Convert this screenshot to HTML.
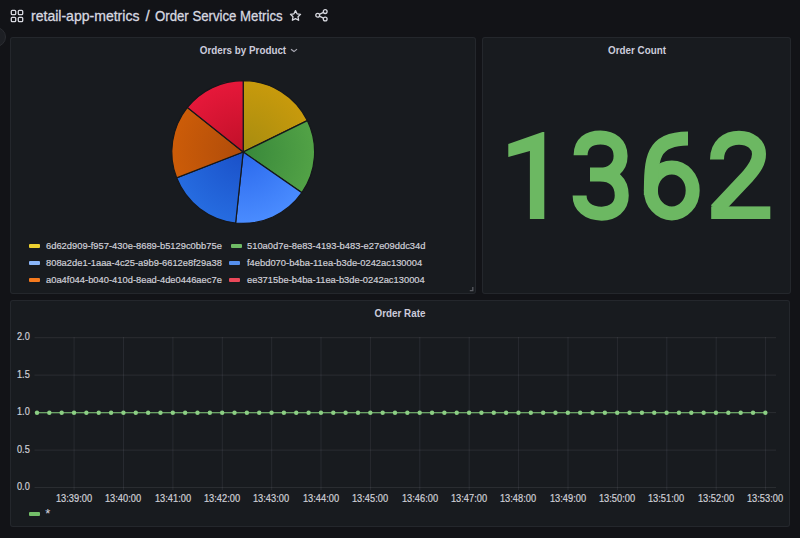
<!DOCTYPE html>
<html><head><meta charset="utf-8"><style>
*{box-sizing:border-box;margin:0;padding:0}
html,body{width:800px;height:538px;overflow:hidden;background:#121317;font-family:"Liberation Sans",sans-serif;color:#ccccdc}
.abs{position:absolute}
.panel{position:absolute;background:#181b1f;border:1px solid rgba(204,204,220,0.07);border-radius:3px}
.title{position:absolute;font-size:10px;font-weight:700;color:#ccccdc;white-space:nowrap;line-height:12px}
.yl{position:absolute;left:0;width:29.5px;text-align:right;font-size:9.1px;line-height:12px;color:#ccccdc}
.xl{position:absolute;top:492px;width:60px;text-align:center;font-size:9.1px;line-height:12px;color:#ccccdc}
.lm{position:absolute;width:11px;height:3.6px;border-radius:1px}
.lt{position:absolute;font-size:9.3px;line-height:12px;white-space:nowrap;color:#ccccdc}
</style></head><body>
<div class="abs" style="left:-14px;top:27px;width:20px;height:20px;border-radius:50%;background:#1d1f24;border:1px solid #2a2c31"></div>
<svg class="abs" style="left:10px;top:9px" width="14" height="14" viewBox="0 0 14 14" fill="none" stroke="#d8d9e0" stroke-width="1.3"><rect x="1.3" y="1.3" width="4.4" height="4.4" rx="1"/><rect x="8.3" y="1.3" width="4.4" height="4.4" rx="1"/><rect x="1.3" y="8.3" width="4.4" height="4.4" rx="1"/><rect x="8.3" y="8.3" width="4.4" height="4.4" rx="1"/></svg>
<div class="abs" style="left:30.50px;top:7.75px;font-size:15px;line-height:15px;font-weight:400;color:#d8d9e0;white-space:nowrap;transform:scaleX(0.936);transform-origin:0 0;-webkit-text-stroke:0.3px #d8d9e0">retail-app-metrics</div>
<div class="abs" style="left:145.50px;top:7.85px;font-size:15px;line-height:15px;font-weight:400;color:#d8d9e0;white-space:nowrap;transform:scaleX(1);transform-origin:0 0;-webkit-text-stroke:0.3px #d8d9e0">/</div><div class="abs" style="left:154.50px;top:7.85px;font-size:15px;line-height:15px;font-weight:400;color:#d8d9e0;white-space:nowrap;transform:scaleX(0.88);transform-origin:0 0;-webkit-text-stroke:0.3px #d8d9e0">Order Service Metrics</div>
<svg class="abs" style="left:288px;top:8px" width="15" height="15" viewBox="0 0 15 15" fill="none" stroke="#d8d9e0" stroke-width="1.3" stroke-linejoin="round"><path d="M7.50 2.65 L9.06 5.81 L12.54 6.31 L10.02 8.77 L10.62 12.24 L7.50 10.60 L4.38 12.24 L4.98 8.77 L2.46 6.31 L5.94 5.81 Z"/></svg>
<svg class="abs" style="left:314px;top:8px" width="16" height="16" viewBox="0 0 16 16" fill="none" stroke="#d8d9e0" stroke-width="1.3"><circle cx="3.7" cy="7.3" r="1.9"/><circle cx="11.2" cy="3.6" r="1.9"/><circle cx="11.2" cy="11.0" r="1.9"/><line x1="5.4" y1="6.45" x2="9.5" y2="4.45"/><line x1="5.4" y1="8.15" x2="9.5" y2="10.15"/></svg>

<div class="panel" style="left:10px;top:37px;width:465.5px;height:257px"></div>
<div class="panel" style="left:482px;top:37px;width:308.5px;height:257px"></div>
<div class="panel" style="left:10px;top:300px;width:780px;height:227px"></div>

<div class="abs" style="left:42.90px;width:400px;text-align:center;top:45.27px;font-size:11.8px;line-height:11.8px;font-weight:700;color:#ccccdc;white-space:nowrap;transform:scaleX(0.833);transform-origin:50% 0;">Orders by Product</div>
<svg class="abs" style="left:290px;top:46px" width="8" height="8" viewBox="0 0 8 8" fill="none" stroke="#a8a8b2" stroke-width="1.2" stroke-linejoin="round"><path d="M1 3.3 L4 5.6 L7 3.1"/></svg>
<div class="abs" style="left:436.60px;width:400px;text-align:center;top:44.67px;font-size:11.8px;line-height:11.8px;font-weight:700;color:#ccccdc;white-space:nowrap;transform:scaleX(0.833);transform-origin:50% 0;">Order Count</div>
<div class="abs" style="left:200.00px;width:400px;text-align:center;top:307.97px;font-size:11.8px;line-height:11.8px;font-weight:700;color:#ccccdc;white-space:nowrap;transform:scaleX(0.833);transform-origin:50% 0;">Order Rate</div>
<svg class="abs" width="800" height="300" style="left:0;top:0"><defs><radialGradient id="g0" gradientUnits="userSpaceOnUse" cx="243.2" cy="152" r="71.4"><stop offset="0" stop-color="#a68c10"/><stop offset="1" stop-color="#c89a0c"/></radialGradient><radialGradient id="g1" gradientUnits="userSpaceOnUse" cx="243.2" cy="152" r="71.4"><stop offset="0" stop-color="#38883a"/><stop offset="1" stop-color="#52a246"/></radialGradient><radialGradient id="g2" gradientUnits="userSpaceOnUse" cx="243.2" cy="152" r="71.4"><stop offset="0" stop-color="#2a68ec"/><stop offset="1" stop-color="#4a8cff"/></radialGradient><radialGradient id="g3" gradientUnits="userSpaceOnUse" cx="243.2" cy="152" r="71.4"><stop offset="0" stop-color="#1a50c8"/><stop offset="1" stop-color="#266ce0"/></radialGradient><radialGradient id="g4" gradientUnits="userSpaceOnUse" cx="243.2" cy="152" r="71.4"><stop offset="0" stop-color="#b04c0a"/><stop offset="1" stop-color="#cc5c08"/></radialGradient><radialGradient id="g5" gradientUnits="userSpaceOnUse" cx="243.2" cy="152" r="71.4"><stop offset="0" stop-color="#c01028"/><stop offset="1" stop-color="#e6183a"/></radialGradient></defs><path d="M243.2,152 L243.20,80.60 A71.4,71.4 0 0 1 307.32,120.59 Z" fill="url(#g0)" stroke="#15171b" stroke-width="1.2"/><path d="M243.2,152 L307.32,120.59 A71.4,71.4 0 0 1 301.90,192.65 Z" fill="url(#g1)" stroke="#15171b" stroke-width="1.2"/><path d="M243.2,152 L301.90,192.65 A71.4,71.4 0 0 1 235.61,223.00 Z" fill="url(#g2)" stroke="#15171b" stroke-width="1.2"/><path d="M243.2,152 L235.61,223.00 A71.4,71.4 0 0 1 176.63,177.82 Z" fill="url(#g3)" stroke="#15171b" stroke-width="1.2"/><path d="M243.2,152 L176.63,177.82 A71.4,71.4 0 0 1 187.40,107.45 Z" fill="url(#g4)" stroke="#15171b" stroke-width="1.2"/><path d="M243.2,152 L187.40,107.45 A71.4,71.4 0 0 1 243.20,80.60 Z" fill="url(#g5)" stroke="#15171b" stroke-width="1.2"/></svg>
<div class="lm" style="left:28.7px;top:244.2px;background:#ecd030"></div><div class="abs" style="left:46.20px;top:240.67px;font-size:9.8px;line-height:9.8px;font-weight:400;color:#d0d0d8;white-space:nowrap;transform:scaleX(0.955);transform-origin:0 0;-webkit-text-stroke:0.2px #d0d0d8">6d62d909-f957-430e-8689-b5129c0bb75e</div><div class="lm" style="left:231px;top:244.2px;background:#6fbb65"></div><div class="abs" style="left:247.30px;top:240.67px;font-size:9.8px;line-height:9.8px;font-weight:400;color:#d0d0d8;white-space:nowrap;transform:scaleX(0.955);transform-origin:0 0;-webkit-text-stroke:0.2px #d0d0d8">510a0d7e-8e83-4193-b483-e27e09ddc34d</div><div class="lm" style="left:28.7px;top:261.2px;background:#8ab6fa"></div><div class="abs" style="left:46.20px;top:257.67px;font-size:9.8px;line-height:9.8px;font-weight:400;color:#d0d0d8;white-space:nowrap;transform:scaleX(0.955);transform-origin:0 0;-webkit-text-stroke:0.2px #d0d0d8">808a2de1-1aaa-4c25-a9b9-6612e8f29a38</div><div class="lm" style="left:229.3px;top:261.2px;background:#5590ee"></div><div class="abs" style="left:246.80px;top:257.67px;font-size:9.8px;line-height:9.8px;font-weight:400;color:#d0d0d8;white-space:nowrap;transform:scaleX(0.955);transform-origin:0 0;-webkit-text-stroke:0.2px #d0d0d8">f4ebd070-b4ba-11ea-b3de-0242ac130004</div><div class="lm" style="left:28.7px;top:278.2px;background:#f57a1e"></div><div class="abs" style="left:46.20px;top:274.67px;font-size:9.8px;line-height:9.8px;font-weight:400;color:#d0d0d8;white-space:nowrap;transform:scaleX(0.955);transform-origin:0 0;-webkit-text-stroke:0.2px #d0d0d8">a0a4f044-b040-410d-8ead-4de0446aec7e</div><div class="lm" style="left:229.3px;top:278.2px;background:#ea4859"></div><div class="abs" style="left:246.80px;top:274.67px;font-size:9.8px;line-height:9.8px;font-weight:400;color:#d0d0d8;white-space:nowrap;transform:scaleX(0.955);transform-origin:0 0;-webkit-text-stroke:0.2px #d0d0d8">ee3715be-b4ba-11ea-b3de-0242ac130004</div>
<svg class="abs" style="left:469px;top:286px" width="6" height="6" viewBox="0 0 6 6" fill="none" stroke="#585a60" stroke-width="1.3"><path d="M3.8 1 L3.8 4.6 L0.8 4.6"/></svg>
<svg class="abs" style="left:0;top:0" width="800" height="300"><g fill="#6cb862"><path d="M544.3,132 L544.3,218.9 L529.9,218.9 L529.9,150.9 L508.3,156.9 L508.3,143.9 L542.5,132 Z"/><rect x="711.2" y="206.4" width="59.1" height="12.6"/></g><g fill="none" stroke="#6cb862" stroke-width="14"><path d="M580.6,155.3 C580.6,143 589,137.4 600.4,137.4 C612,137.4 620.6,144 620.6,156 C620.6,168 611,174.6 600,174.6 L590,174.6 M600,174.6 C613,174.6 621.75,182 621.75,195.5 C621.75,207 613,213.65 601.7,213.65 C588,213.65 579.6,206 579.6,195.5"/><ellipse cx="671.8" cy="190.4" rx="20.9" ry="23"/><path d="M650.85,195 C650.85,158 652,138.5 688,138.5"/><path d="M717,159.5 C717,145 727,137.65 739,137.65 C751,137.65 759,145 759,154 C759,162 755,168 748,176 L716,210"/></g></svg>
<svg class="abs" width="800" height="538" style="left:0;top:0"><line x1="34.5" y1="337.7" x2="776" y2="337.7" stroke="rgba(204,204,220,0.1)" stroke-width="1"/><line x1="34.5" y1="375.1" x2="776" y2="375.1" stroke="rgba(204,204,220,0.1)" stroke-width="1"/><line x1="34.5" y1="412.6" x2="776" y2="412.6" stroke="rgba(204,204,220,0.1)" stroke-width="1"/><line x1="34.5" y1="450.1" x2="776" y2="450.1" stroke="rgba(204,204,220,0.1)" stroke-width="1"/><line x1="34.5" y1="487.5" x2="776" y2="487.5" stroke="rgba(204,204,220,0.1)" stroke-width="1"/><line x1="74.1" y1="337" x2="74.1" y2="490" stroke="rgba(204,204,220,0.09)" stroke-width="1"/><line x1="123.5" y1="337" x2="123.5" y2="490" stroke="rgba(204,204,220,0.09)" stroke-width="1"/><line x1="172.9" y1="337" x2="172.9" y2="490" stroke="rgba(204,204,220,0.09)" stroke-width="1"/><line x1="222.3" y1="337" x2="222.3" y2="490" stroke="rgba(204,204,220,0.09)" stroke-width="1"/><line x1="271.7" y1="337" x2="271.7" y2="490" stroke="rgba(204,204,220,0.09)" stroke-width="1"/><line x1="321.0" y1="337" x2="321.0" y2="490" stroke="rgba(204,204,220,0.09)" stroke-width="1"/><line x1="370.4" y1="337" x2="370.4" y2="490" stroke="rgba(204,204,220,0.09)" stroke-width="1"/><line x1="419.8" y1="337" x2="419.8" y2="490" stroke="rgba(204,204,220,0.09)" stroke-width="1"/><line x1="469.2" y1="337" x2="469.2" y2="490" stroke="rgba(204,204,220,0.09)" stroke-width="1"/><line x1="518.6" y1="337" x2="518.6" y2="490" stroke="rgba(204,204,220,0.09)" stroke-width="1"/><line x1="568.0" y1="337" x2="568.0" y2="490" stroke="rgba(204,204,220,0.09)" stroke-width="1"/><line x1="617.4" y1="337" x2="617.4" y2="490" stroke="rgba(204,204,220,0.09)" stroke-width="1"/><line x1="666.8" y1="337" x2="666.8" y2="490" stroke="rgba(204,204,220,0.09)" stroke-width="1"/><line x1="716.2" y1="337" x2="716.2" y2="490" stroke="rgba(204,204,220,0.09)" stroke-width="1"/><line x1="765.6" y1="337" x2="765.6" y2="490" stroke="rgba(204,204,220,0.09)" stroke-width="1"/><line x1="37.0" y1="412.8" x2="765.36" y2="412.8" stroke="#80c878" stroke-width="1.1"/><circle cx="37.00" cy="412.8" r="2.2" fill="#8ccf84"/><circle cx="49.34" cy="412.8" r="2.2" fill="#8ccf84"/><circle cx="61.69" cy="412.8" r="2.2" fill="#8ccf84"/><circle cx="74.03" cy="412.8" r="2.2" fill="#8ccf84"/><circle cx="86.38" cy="412.8" r="2.2" fill="#8ccf84"/><circle cx="98.72" cy="412.8" r="2.2" fill="#8ccf84"/><circle cx="111.07" cy="412.8" r="2.2" fill="#8ccf84"/><circle cx="123.42" cy="412.8" r="2.2" fill="#8ccf84"/><circle cx="135.76" cy="412.8" r="2.2" fill="#8ccf84"/><circle cx="148.11" cy="412.8" r="2.2" fill="#8ccf84"/><circle cx="160.45" cy="412.8" r="2.2" fill="#8ccf84"/><circle cx="172.80" cy="412.8" r="2.2" fill="#8ccf84"/><circle cx="185.14" cy="412.8" r="2.2" fill="#8ccf84"/><circle cx="197.49" cy="412.8" r="2.2" fill="#8ccf84"/><circle cx="209.83" cy="412.8" r="2.2" fill="#8ccf84"/><circle cx="222.18" cy="412.8" r="2.2" fill="#8ccf84"/><circle cx="234.52" cy="412.8" r="2.2" fill="#8ccf84"/><circle cx="246.87" cy="412.8" r="2.2" fill="#8ccf84"/><circle cx="259.21" cy="412.8" r="2.2" fill="#8ccf84"/><circle cx="271.56" cy="412.8" r="2.2" fill="#8ccf84"/><circle cx="283.90" cy="412.8" r="2.2" fill="#8ccf84"/><circle cx="296.25" cy="412.8" r="2.2" fill="#8ccf84"/><circle cx="308.59" cy="412.8" r="2.2" fill="#8ccf84"/><circle cx="320.94" cy="412.8" r="2.2" fill="#8ccf84"/><circle cx="333.28" cy="412.8" r="2.2" fill="#8ccf84"/><circle cx="345.62" cy="412.8" r="2.2" fill="#8ccf84"/><circle cx="357.97" cy="412.8" r="2.2" fill="#8ccf84"/><circle cx="370.31" cy="412.8" r="2.2" fill="#8ccf84"/><circle cx="382.66" cy="412.8" r="2.2" fill="#8ccf84"/><circle cx="395.00" cy="412.8" r="2.2" fill="#8ccf84"/><circle cx="407.35" cy="412.8" r="2.2" fill="#8ccf84"/><circle cx="419.69" cy="412.8" r="2.2" fill="#8ccf84"/><circle cx="432.04" cy="412.8" r="2.2" fill="#8ccf84"/><circle cx="444.39" cy="412.8" r="2.2" fill="#8ccf84"/><circle cx="456.73" cy="412.8" r="2.2" fill="#8ccf84"/><circle cx="469.08" cy="412.8" r="2.2" fill="#8ccf84"/><circle cx="481.42" cy="412.8" r="2.2" fill="#8ccf84"/><circle cx="493.77" cy="412.8" r="2.2" fill="#8ccf84"/><circle cx="506.11" cy="412.8" r="2.2" fill="#8ccf84"/><circle cx="518.46" cy="412.8" r="2.2" fill="#8ccf84"/><circle cx="530.80" cy="412.8" r="2.2" fill="#8ccf84"/><circle cx="543.14" cy="412.8" r="2.2" fill="#8ccf84"/><circle cx="555.49" cy="412.8" r="2.2" fill="#8ccf84"/><circle cx="567.84" cy="412.8" r="2.2" fill="#8ccf84"/><circle cx="580.18" cy="412.8" r="2.2" fill="#8ccf84"/><circle cx="592.52" cy="412.8" r="2.2" fill="#8ccf84"/><circle cx="604.87" cy="412.8" r="2.2" fill="#8ccf84"/><circle cx="617.22" cy="412.8" r="2.2" fill="#8ccf84"/><circle cx="629.56" cy="412.8" r="2.2" fill="#8ccf84"/><circle cx="641.91" cy="412.8" r="2.2" fill="#8ccf84"/><circle cx="654.25" cy="412.8" r="2.2" fill="#8ccf84"/><circle cx="666.60" cy="412.8" r="2.2" fill="#8ccf84"/><circle cx="678.94" cy="412.8" r="2.2" fill="#8ccf84"/><circle cx="691.29" cy="412.8" r="2.2" fill="#8ccf84"/><circle cx="703.63" cy="412.8" r="2.2" fill="#8ccf84"/><circle cx="715.98" cy="412.8" r="2.2" fill="#8ccf84"/><circle cx="728.32" cy="412.8" r="2.2" fill="#8ccf84"/><circle cx="740.67" cy="412.8" r="2.2" fill="#8ccf84"/><circle cx="753.01" cy="412.8" r="2.2" fill="#8ccf84"/><circle cx="765.36" cy="412.8" r="2.2" fill="#8ccf84"/></svg>
<div class="abs" style="left:16.50px;top:332.14px;font-size:10.3px;line-height:10.3px;font-weight:400;color:#d0d0d8;white-space:nowrap;transform:scaleX(0.89);transform-origin:0 0;-webkit-text-stroke:0.2px #d0d0d8">2.0</div><div class="abs" style="left:16.50px;top:369.59px;font-size:10.3px;line-height:10.3px;font-weight:400;color:#d0d0d8;white-space:nowrap;transform:scaleX(0.89);transform-origin:0 0;-webkit-text-stroke:0.2px #d0d0d8">1.5</div><div class="abs" style="left:16.50px;top:407.05px;font-size:10.3px;line-height:10.3px;font-weight:400;color:#d0d0d8;white-space:nowrap;transform:scaleX(0.89);transform-origin:0 0;-webkit-text-stroke:0.2px #d0d0d8">1.0</div><div class="abs" style="left:16.50px;top:444.50px;font-size:10.3px;line-height:10.3px;font-weight:400;color:#d0d0d8;white-space:nowrap;transform:scaleX(0.89);transform-origin:0 0;-webkit-text-stroke:0.2px #d0d0d8">0.5</div><div class="abs" style="left:16.50px;top:481.94px;font-size:10.3px;line-height:10.3px;font-weight:400;color:#d0d0d8;white-space:nowrap;transform:scaleX(0.89);transform-origin:0 0;-webkit-text-stroke:0.2px #d0d0d8">0.0</div>
<div class="abs" style="left:-126.20px;width:400px;text-align:center;top:494.25px;font-size:10.3px;line-height:10.3px;font-weight:400;color:#d0d0d8;white-space:nowrap;transform:scaleX(0.9);transform-origin:50% 0;-webkit-text-stroke:0.2px #d0d0d8">13:39:00</div><div class="abs" style="left:-76.81px;width:400px;text-align:center;top:494.25px;font-size:10.3px;line-height:10.3px;font-weight:400;color:#d0d0d8;white-space:nowrap;transform:scaleX(0.9);transform-origin:50% 0;-webkit-text-stroke:0.2px #d0d0d8">13:40:00</div><div class="abs" style="left:-27.42px;width:400px;text-align:center;top:494.25px;font-size:10.3px;line-height:10.3px;font-weight:400;color:#d0d0d8;white-space:nowrap;transform:scaleX(0.9);transform-origin:50% 0;-webkit-text-stroke:0.2px #d0d0d8">13:41:00</div><div class="abs" style="left:21.97px;width:400px;text-align:center;top:494.25px;font-size:10.3px;line-height:10.3px;font-weight:400;color:#d0d0d8;white-space:nowrap;transform:scaleX(0.9);transform-origin:50% 0;-webkit-text-stroke:0.2px #d0d0d8">13:42:00</div><div class="abs" style="left:71.36px;width:400px;text-align:center;top:494.25px;font-size:10.3px;line-height:10.3px;font-weight:400;color:#d0d0d8;white-space:nowrap;transform:scaleX(0.9);transform-origin:50% 0;-webkit-text-stroke:0.2px #d0d0d8">13:43:00</div><div class="abs" style="left:120.75px;width:400px;text-align:center;top:494.25px;font-size:10.3px;line-height:10.3px;font-weight:400;color:#d0d0d8;white-space:nowrap;transform:scaleX(0.9);transform-origin:50% 0;-webkit-text-stroke:0.2px #d0d0d8">13:44:00</div><div class="abs" style="left:170.14px;width:400px;text-align:center;top:494.25px;font-size:10.3px;line-height:10.3px;font-weight:400;color:#d0d0d8;white-space:nowrap;transform:scaleX(0.9);transform-origin:50% 0;-webkit-text-stroke:0.2px #d0d0d8">13:45:00</div><div class="abs" style="left:219.53px;width:400px;text-align:center;top:494.25px;font-size:10.3px;line-height:10.3px;font-weight:400;color:#d0d0d8;white-space:nowrap;transform:scaleX(0.9);transform-origin:50% 0;-webkit-text-stroke:0.2px #d0d0d8">13:46:00</div><div class="abs" style="left:268.92px;width:400px;text-align:center;top:494.25px;font-size:10.3px;line-height:10.3px;font-weight:400;color:#d0d0d8;white-space:nowrap;transform:scaleX(0.9);transform-origin:50% 0;-webkit-text-stroke:0.2px #d0d0d8">13:47:00</div><div class="abs" style="left:318.31px;width:400px;text-align:center;top:494.25px;font-size:10.3px;line-height:10.3px;font-weight:400;color:#d0d0d8;white-space:nowrap;transform:scaleX(0.9);transform-origin:50% 0;-webkit-text-stroke:0.2px #d0d0d8">13:48:00</div><div class="abs" style="left:367.70px;width:400px;text-align:center;top:494.25px;font-size:10.3px;line-height:10.3px;font-weight:400;color:#d0d0d8;white-space:nowrap;transform:scaleX(0.9);transform-origin:50% 0;-webkit-text-stroke:0.2px #d0d0d8">13:49:00</div><div class="abs" style="left:417.09px;width:400px;text-align:center;top:494.25px;font-size:10.3px;line-height:10.3px;font-weight:400;color:#d0d0d8;white-space:nowrap;transform:scaleX(0.9);transform-origin:50% 0;-webkit-text-stroke:0.2px #d0d0d8">13:50:00</div><div class="abs" style="left:466.48px;width:400px;text-align:center;top:494.25px;font-size:10.3px;line-height:10.3px;font-weight:400;color:#d0d0d8;white-space:nowrap;transform:scaleX(0.9);transform-origin:50% 0;-webkit-text-stroke:0.2px #d0d0d8">13:51:00</div><div class="abs" style="left:515.87px;width:400px;text-align:center;top:494.25px;font-size:10.3px;line-height:10.3px;font-weight:400;color:#d0d0d8;white-space:nowrap;transform:scaleX(0.9);transform-origin:50% 0;-webkit-text-stroke:0.2px #d0d0d8">13:52:00</div><div class="abs" style="left:565.26px;width:400px;text-align:center;top:494.25px;font-size:10.3px;line-height:10.3px;font-weight:400;color:#d0d0d8;white-space:nowrap;transform:scaleX(0.9);transform-origin:50% 0;-webkit-text-stroke:0.2px #d0d0d8">13:53:00</div>
<div class="abs" style="left:29px;top:512px;width:11px;height:3.5px;border-radius:1px;background:#73BF69"></div>
<div class="abs" style="left:45.30px;top:506.95px;font-size:13px;line-height:13px;font-weight:400;color:#d8d9e0;white-space:nowrap;transform:scaleX(1);transform-origin:0 0;">*</div>
</body></html>
